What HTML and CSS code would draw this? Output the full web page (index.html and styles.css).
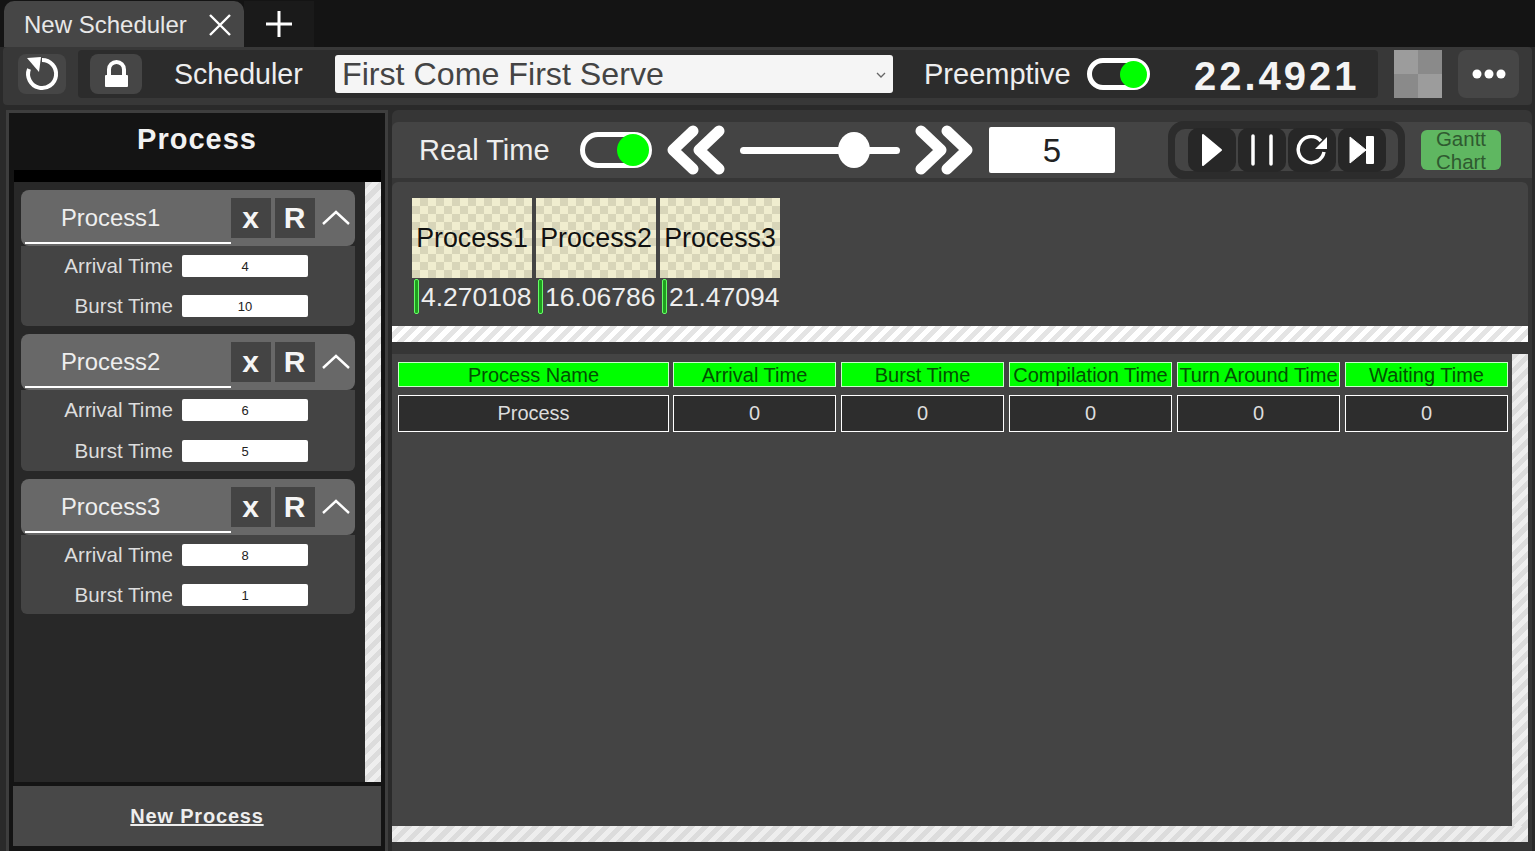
FILE: index.html
```html
<!DOCTYPE html>
<html>
<head>
<meta charset="utf-8">
<title>New Scheduler</title>
<link rel="stylesheet" href="styles.css">
</head>
<body>
<div class="tabbar">
  <div class="tab">
    <span class="tab-name">New Scheduler</span>
    <svg class="tab-close" width="24" height="24" viewBox="0 0 24 24"><path d="M2 2L22 22M22 2L2 22" stroke="#fff" stroke-width="2.400" fill="none"/></svg>
  </div>
  <div class="tab-add">
    <svg width="28" height="28" viewBox="0 0 28 28"><path d="M14 1V27M1 14H27" stroke="#fff" stroke-width="3" fill="none"/></svg>
  </div>
</div>

<div class="toolbar">
  <div class="icon-btn reload">
    <svg width="36" height="36" viewBox="0 0 36 36"><path d="M18 4A14 14 0 1 1 5 13" stroke="#fff" stroke-width="4" fill="none"/><path d="M3 2L17 1L15 16Z" fill="#fff"/></svg>
  </div>
  <div class="tool-group">
    <div class="icon-btn lock">
      <svg width="26" height="30" viewBox="0 0 26 30"><path d="M6 17V10.500A7.500 7.500 0 0 1 21 10.500V17" stroke="#fff" stroke-width="4" fill="none"/><rect x="2" y="16" width="23" height="12" rx="1" fill="#fff"/></svg>
    </div>
    <span class="tool-label sched-label">Scheduler</span>
    <div class="select">
      <span>First Come First Serve</span>
      <svg width="10" height="6" viewBox="0 0 10 6"><path d="M1 1L5 5L9 1" stroke="#666" stroke-width="1.300" fill="none"/></svg>
    </div>
    <span class="tool-label pre-label">Preemptive</span>
    <div class="toggle small"><span class="knob"></span></div>
    <span class="clock">22.4921</span>
  </div>
  <div class="checker-box"></div>
  <div class="icon-btn more">
    <svg width="36" height="12" viewBox="0 0 36 12"><circle cx="6" cy="6" r="4.500" fill="#fff"/><circle cx="18" cy="6" r="4.500" fill="#fff"/><circle cx="30" cy="6" r="4.500" fill="#fff"/></svg>
  </div>
</div>

<div class="main">
  <div class="side">
    <div class="side-title">Process</div>
    <div class="side-strip"></div>
    <div class="side-scroll">
      <div class="side-list">

        <div class="card">
          <div class="card-head">
            <span class="card-name">Process1</span>
            <span class="square">x</span>
            <span class="square">R</span>
            <svg class="caret" width="28" height="16" viewBox="0 0 28 16"><path d="M1 14L14 2L27 14" stroke="#fff" stroke-width="2.400" fill="none"/></svg>
          </div>
          <div class="card-body">
            <div class="field"><span class="field-label">Arrival Time</span><span class="field-input">4</span></div>
            <div class="field"><span class="field-label">Burst Time</span><span class="field-input">10</span></div>
          </div>
        </div>

        <div class="card">
          <div class="card-head">
            <span class="card-name">Process2</span>
            <span class="square">x</span>
            <span class="square">R</span>
            <svg class="caret" width="28" height="16" viewBox="0 0 28 16"><path d="M1 14L14 2L27 14" stroke="#fff" stroke-width="2.400" fill="none"/></svg>
          </div>
          <div class="card-body tall">
            <div class="field"><span class="field-label">Arrival Time</span><span class="field-input">6</span></div>
            <div class="field"><span class="field-label">Burst Time</span><span class="field-input">5</span></div>
          </div>
        </div>

        <div class="card">
          <div class="card-head">
            <span class="card-name">Process3</span>
            <span class="square">x</span>
            <span class="square">R</span>
            <svg class="caret" width="28" height="16" viewBox="0 0 28 16"><path d="M1 14L14 2L27 14" stroke="#fff" stroke-width="2.400" fill="none"/></svg>
          </div>
          <div class="card-body short">
            <div class="field"><span class="field-label">Arrival Time</span><span class="field-input">8</span></div>
            <div class="field"><span class="field-label">Burst Time</span><span class="field-input">1</span></div>
          </div>
        </div>

      </div>
      <div class="vscroll"></div>
    </div>
    <div class="new-process"><span>New Process</span></div>
  </div>

  <div class="content">
    <div class="controls">
      <span class="rt-label">Real Time</span>
      <div class="toggle big"><span class="knob"></span></div>
      <svg class="chev-left" width="58" height="50" viewBox="0 0 58 50"><path d="M26 6L6 25L26 44M52 6L32 25L52 44" stroke="#fff" stroke-width="11" stroke-linecap="round" stroke-linejoin="round" fill="none"/></svg>
      <div class="slider"><span class="slider-knob"></span></div>
      <svg class="chev-right" width="58" height="50" viewBox="0 0 58 50"><path d="M6 6L26 25L6 44M32 6L52 25L32 44" stroke="#fff" stroke-width="11" stroke-linecap="round" stroke-linejoin="round" fill="none"/></svg>
      <div class="speed">5</div>
      <div class="player">
        <div class="player-inner">
          <div class="play-btn"><svg width="24" height="34" viewBox="0 0 24 34"><path d="M3 2L21 17L3 32Z" fill="#fff" stroke="#fff" stroke-width="2" stroke-linejoin="round"/></svg></div>
          <div class="play-btn"><svg width="26" height="32" viewBox="0 0 26 32"><path d="M4 2V30M22 2V30" stroke="#fff" stroke-width="3.500" stroke-linecap="round" fill="none"/></svg></div>
          <div class="play-btn"><svg width="34" height="30" viewBox="0 0 34 30"><path d="M26 6A13 13 0 1 0 29 17" stroke="#fff" stroke-width="3.500" fill="none"/><path d="M32 2V14H20Z" fill="#fff"/></svg></div>
          <div class="play-btn"><svg width="28" height="30" viewBox="0 0 28 30"><path d="M2 2L18 15L2 28Z" fill="#fff" stroke="#fff" stroke-linejoin="round"/><rect x="18" y="1" width="8" height="28" rx="1" fill="#fff"/></svg></div>
        </div>
      </div>
      <div class="gantt-btn"><span>Gantt</span><span>Chart</span></div>
    </div>

    <div class="gantt">
      <div class="gantt-row">
        <div class="gantt-item">
          <div class="gantt-cell">Process1</div>
          <div class="gantt-time"><span class="marker"></span>4.270108</div>
        </div>
        <div class="gantt-item">
          <div class="gantt-cell">Process2</div>
          <div class="gantt-time"><span class="marker"></span>16.06786</div>
        </div>
        <div class="gantt-item">
          <div class="gantt-cell">Process3</div>
          <div class="gantt-time"><span class="marker"></span>21.47094</div>
        </div>
      </div>
      <div class="hscroll"></div>
    </div>

    <div class="results">
      <div class="results-top">
        <div class="table">
          <div class="th first">Process Name</div>
          <div class="th">Arrival Time</div>
          <div class="th">Burst Time</div>
          <div class="th">Compilation Time</div>
          <div class="th">Turn Around Time</div>
          <div class="th">Waiting Time</div>
          <div class="td first">Process</div>
          <div class="td">0</div>
          <div class="td">0</div>
          <div class="td">0</div>
          <div class="td">0</div>
          <div class="td">0</div>
        </div>
        <div class="vscroll"></div>
      </div>
      <div class="hscroll grey"></div>
    </div>
  </div>
</div>
</body>
</html>
```

FILE: styles.css
```css
* {box-sizing: border-box;}
html, body {margin: 0; height: 851px; overflow: hidden;}
body {font-family: "Liberation Sans", Arial, sans-serif; background-color: #2a2a2a; color: #eee;}

/* tabs */
.tabbar {height: 47px; background-color: #141414; display: flex; padding: 1px 0 0 4px;}
.tab {width: 240px; height: 46px; background-color: #464646; border-radius: 10px 10px 0 0; display: flex; align-items: center; padding: 2px 0 0 20px;}
.tab-name {font-size: 24px; color: #e8e8e8; width: 184px; white-space: nowrap;}
.tab-add {width: 70px; height: 46px; background-color: #1a1a1a; display: flex; align-items: center; justify-content: center;}

/* top toolbar */
.toolbar {height: 58px; margin: 0 3px; background-color: #383838; border-radius: 4px; display: flex; align-items: flex-start; padding: 3px 0 0 15px;}
.icon-btn {background-color: #464646; border-radius: 8px; display: flex; align-items: center; justify-content: center;}
.reload {width: 48px; height: 40px; margin-top: 4px;}
.tool-group {width: 1300px; height: 48px; margin-left: 12px; background-color: #2c2c2c; border-radius: 4px; display: flex; align-items: center; padding-left: 12px;}
.lock {width: 52px; height: 40px;}
.tool-label {font-size: 29px; color: #eee; white-space: nowrap;}
.sched-label {margin-left: 32px; width: 161px; font-size: 28.600px;}
.select {width: 558px; height: 38px; background-color: #f5f5f5; border-radius: 3px; display: flex; align-items: center; justify-content: space-between; padding: 1px 7px 0; font-size: 32.200px; color: #444;}
.pre-label {margin-left: 31px; width: 163px;}
.clock {margin: 4px 0 0 44px; font-size: 40px; font-weight: bold; color: #f4f4f4; letter-spacing: 3px; white-space: nowrap;}
.checker-box {width: 48px; height: 48px; margin-left: 16px; background: conic-gradient(#8a8a8a 25%, #9c9c9c 0 50%, #8a8a8a 0 75%, #9c9c9c 0);}
.more {width: 61px; height: 48px; margin-left: 16px;}

/* toggles */
.toggle {border: 5px solid #fff; border-radius: 20px; display: flex; align-items: center; justify-content: flex-end;}
.toggle .knob {background-color: #00ff00; border-radius: 50%;}
.toggle.small {width: 63px; height: 32px;}
.toggle.small .knob {width: 27px; height: 27px; margin-right: -2px;}
.toggle.big {width: 72px; height: 36px;}
.toggle.big .knob {width: 32px; height: 32px; margin-right: -2px;}

/* layout */
.main {display: flex; height: 746px;}
.side {width: 382px; height: 741px; margin: 5px 0 0 6px; background-color: #141414; border: 3px solid #3e3e3e; border-bottom: 0; padding: 0 4px; display: flex; flex-direction: column;}
.side-title {height: 57px; text-align: center; font-size: 29px; font-weight: bold; line-height: 52px; letter-spacing: 1px; color: #f2f2f2;}
.side-strip {height: 12px; background-color: #000; margin-left: 1px;}
.side-scroll {display: flex; height: 600px; margin-left: 1px;}
.side-list {width: 351px; background-color: #282828; padding: 8px 0 0 7px; display: flex; flex-direction: column; gap: 8px;}
.vscroll {width: 16px; background: repeating-linear-gradient(-45deg, #dcdcdc 0 5px, #eeeeee 5px 10px);}
.new-process {height: 60px; margin-top: 4px; background-color: #484848; display: flex; align-items: center; justify-content: center; font-size: 20px; font-weight: bold; letter-spacing: .8px; color: #eee;}
.new-process span {text-decoration: underline;}

/* process cards */
.card {width: 334px;}
.card-head {height: 56px; background-color: #686868; border-radius: 8px; display: flex; align-items: center; padding-left: 4px;}
.card-name {width: 206px; height: 54px; align-self: flex-start; line-height: 56px; padding-left: 36px; font-size: 23.800px; color: #eee; border-bottom: 2px solid #fff;}
.square {width: 40px; height: 40px; background-color: #444; color: #f5f5f5; font-size: 30px; font-weight: bold; text-align: center; line-height: 40px; margin-right: 4px; padding-right: 1px;}
.caret {margin-left: 3px;}
.card-body {background-color: #444; border-radius: 0 0 6px 6px; padding-top: 9px; display: flex; flex-direction: column; gap: 18px; height: 80px;}
.card-body.tall {height: 81px; gap: 19px;}
.card-body.short {height: 79px;}
.field {display: flex; align-items: center; height: 22px;}
.field-label {width: 152px; text-align: right; font-size: 20.600px; color: #ddd;}
.field-input {width: 126px; height: 22px; margin-left: 9px; background-color: #fff; border-radius: 2px; text-align: center; font-size: 13px; line-height: 23px; color: #222;}

/* right side */
.content {width: 1140px; height: 741px; margin: 5px 0 0 4px; padding-top: 12px; background-color: #363636; border-radius: 6px 6px 0 0; display: flex; flex-direction: column;}
.controls {height: 56px; background-color: #444; border-radius: 6px 6px 0 0; display: flex; align-items: center; padding-left: 27px;}
.rt-label {font-size: 29px; color: #eee; width: 161px; white-space: nowrap;}
.chev-left {margin-left: 15px;}
.slider {width: 160px; height: 7px; margin-left: 15px; background-color: #fff; border-radius: 4px; display: flex; align-items: center;}
.slider-knob {width: 32px; height: 36px; margin-left: 98px; background-color: #fff; border-radius: 50%;}
.chev-right {margin-left: 15px;}
.speed {width: 126px; height: 46px; margin-left: 16px; background-color: #fff; border-radius: 2px; text-align: center; font-size: 33px; line-height: 47px; color: #222;}
.player {width: 237px; height: 58px; margin-left: 53px; background-color: #2c2c2c; border-radius: 16px; padding: 8px 7px;}
.player-inner {height: 42px; background-color: #444; border-radius: 10px; display: flex; gap: 2px; padding-left: 13px; align-items: center;}
.play-btn {width: 48px; height: 44px; background-color: #272727; border-radius: 10px; display: flex; align-items: center; justify-content: center;}
.gantt-btn {width: 80px; height: 40px; margin-left: 16px; background-color: #5fb761; border-radius: 6px; font-size: 20.500px; line-height: 23px; color: #2f5a30; display: flex; flex-direction: column; align-items: center; justify-content: center;}

.gantt {width: 1136px; height: 160px; margin-top: 4px; background-color: #444; border-radius: 6px 6px 0 0; display: flex; flex-direction: column; justify-content: space-between;}
.gantt-row {display: flex; gap: 4px; padding: 16px 0 0 20px;}
.gantt-item {width: 120px;}
.gantt-cell {height: 80px; background-color: #f0edcf; background-image: conic-gradient(#d8d5b9 25%, transparent 0 50%, #d8d5b9 0 75%, transparent 0); background-size: 16px 16px; color: #111; font-size: 26.800px; line-height: 81px; text-align: center; white-space: nowrap; overflow: hidden;}
.gantt-time {display: flex; align-items: center; height: 37px; padding: 1px 0 0 3px; font-size: 26.500px; color: #eee; white-space: nowrap;}
.marker {width: 5px; height: 35px; margin-left: -1px; margin-top: -1px; border: 1px solid #66ff66; border-radius: 2px; background-color: #1f9f1f; margin-right: 2px; flex-shrink: 0;}
.hscroll {height: 16px; background: repeating-linear-gradient(-45deg, #fff 0 5px, #e4e4e4 5px 10px);}
.hscroll.grey {background: repeating-linear-gradient(-45deg, #dcdcdc 0 5px, #eeeeee 5px 10px);}

.results {width: 1136px; height: 488px; margin-top: 12px; display: flex; flex-direction: column;}
.results-top {flex: 1; display: flex; background-color: #444;}
.table {flex: 1; display: grid; grid-template-columns: 270px repeat(5, 163px); column-gap: 5px; row-gap: 8px; grid-auto-rows: min-content; padding: 8px 0 0 6px;}
.th {height: 25px; background-color: #00ff00; border: 1px solid #c8ffc8; color: #035003; font-size: 20px; line-height: 24px; text-align: center; white-space: nowrap;}
.td {height: 37px; background-color: #2d2d2d; border: 1px solid #fff; color: #ddd; font-size: 20px; line-height: 35px; text-align: center;}
.first {margin-right: -1px;}
```
